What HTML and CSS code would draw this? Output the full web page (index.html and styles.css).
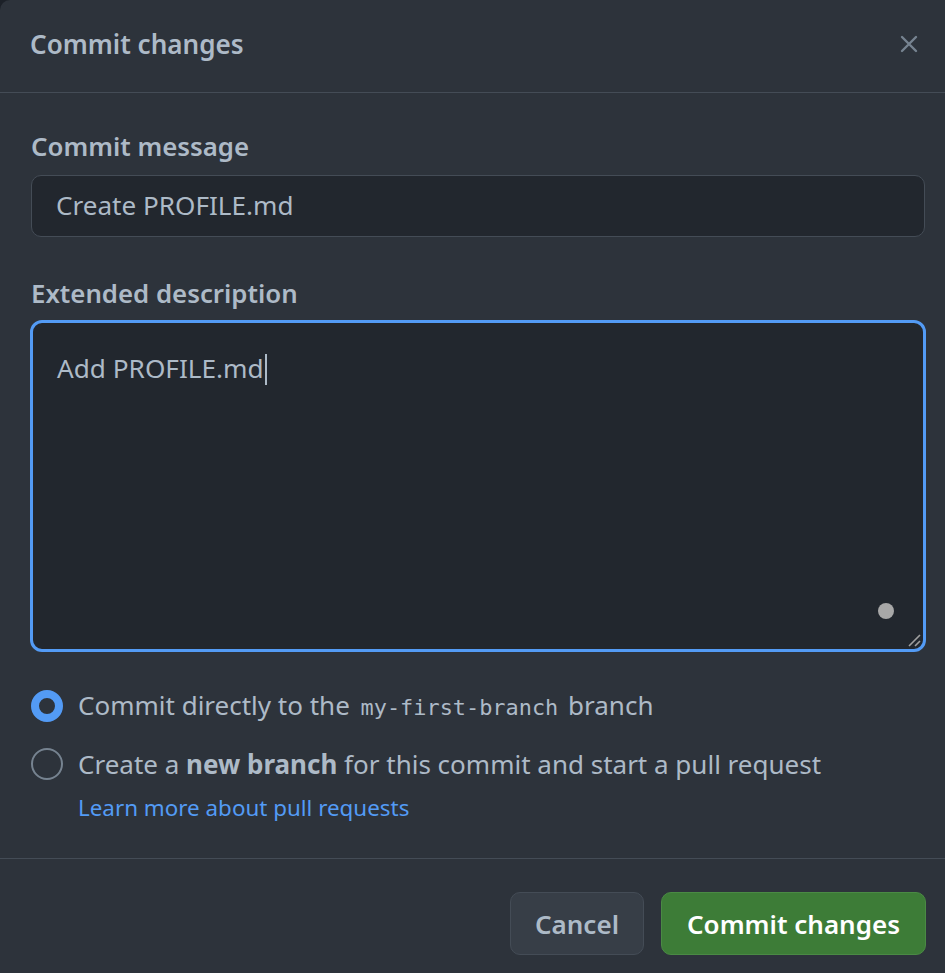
FILE: index.html
```html
<!DOCTYPE html>
<html lang="en">
<head>
<meta charset="utf-8">
<title>Commit changes</title>
<link rel="stylesheet" href="styles.css">
</head>
<body>
<div class="dialog">
  <header class="dialog-header">
    <h1 class="dialog-title">Commit changes</h1>
    <button class="close-btn" aria-label="Close">
      <svg width="18" height="18" viewBox="0 0 18 18"><path d="M2 2 L16 16 M16 2 L2 16" stroke="#768390" stroke-width="2.4" stroke-linecap="round" fill="none"/></svg>
    </button>
  </header>
  <div class="dialog-body">
    <label class="field-label">Commit message</label>
    <div class="text-input">Create PROFILE.md</div>
    <label class="field-label second">Extended description</label>
    <div class="textarea">
      <span class="ta-text">Add PROFILE.md</span><span class="caret"></span>
      <span class="ext-dot"></span>
      <svg class="resize" width="14" height="14" viewBox="0 0 14 14"><path d="M2 13 L13 2 M8 13 L13 8" stroke="#a0a0a0" stroke-width="1.6" fill="none"/></svg>
    </div>
    <div class="options">
      <div class="radio-row">
        <span class="radio checked"></span>
        <span class="radio-text">Commit directly to the <code class="mono">my-first-branch</code> branch</span>
      </div>
      <div class="radio-row">
        <span class="radio"></span>
        <span class="radio-text">Create a <strong>new branch</strong> for this commit and start a pull request</span>
      </div>
      <a class="learn-link" href="#">Learn more about pull requests</a>
    </div>
  </div>
  <footer class="dialog-footer">
    <button class="btn btn-cancel">Cancel</button>
    <button class="btn btn-primary">Commit changes</button>
  </footer>
</div>
</body>
</html>
```
FILE: styles.css
```css
* { box-sizing: border-box; }
html, body { margin: 0; padding: 0; }
body {
  background: #1c2128;
  font-family: "Noto Sans", "Open Sans", sans-serif;
  color: #adbac7;
  width: 945px;
  height: 973px;
  overflow: hidden;
}
.dialog {
  background: #2d333b;
  width: 945px;
  height: 973px;
  border-top-left-radius: 10px;
}
.dialog-header {
  height: 93px;
  border-bottom: 1px solid #444c56;
  display: flex;
  align-items: center;
  justify-content: space-between;
  padding: 0 27px 0 30px;
}
.dialog-title {
  margin: 0;
  font-size: 26.1px;
  font-weight: 600;
  color: #adbac7;
  line-height: 36px;
  position: relative;
  top: -2px;
}
.close-btn {
  background: none;
  border: 0;
  padding: 0;
  width: 18px;
  height: 18px;
  display: flex;
  position: relative;
  top: -2px;
}
.dialog-body {
  padding: 35px 20px 0 31px;
  display: flex;
  flex-direction: column;
}
.field-label {
  display: block;
  font-size: 25.8px;
  font-weight: 600;
  line-height: 36px;
  height: 36px;
  margin-bottom: 11px;
  color: #adbac7;
}
.field-label.second { margin-top: 38px; margin-bottom: 9px; }
.text-input {
  height: 62px;
  background: #22272e;
  border: 1.5px solid #444c56;
  border-radius: 10px;
  font-size: 26.1px;
  line-height: 59px;
  padding-left: 24px;
  color: #adbac7;
}
.textarea {
  position: relative;
  height: 332px;
  margin-left: -1px;
  margin-right: -1px;
  background: #22272e;
  border: 3px solid #539bf5;
  border-radius: 12px;
  padding: 25px 0 0 24px;
  font-size: 26.2px;
  line-height: 40px;
  color: #adbac7;
}
.caret {
  display: inline-block;
  width: 2px;
  height: 31px;
  background: #adbac7;
  vertical-align: -7px;
  margin-left: 1px;
}
.ext-dot {
  position: absolute;
  right: 29px;
  bottom: 30px;
  width: 16px;
  height: 16px;
  border-radius: 50%;
  background: #a8a8a8;
}
.resize {
  position: absolute;
  right: 2px;
  bottom: 2px;
}
.options {
  margin-top: 34px;
  display: flex;
  flex-direction: column;
}
.radio-row {
  display: flex;
  align-items: center;
  height: 40px;
  gap: 15px;
  margin-bottom: 18px;
}
.radio-row + .radio-row { margin-bottom: 6px; }
.radio {
  width: 32px;
  height: 32px;
  border-radius: 50%;
  border: 2px solid #768390;
  flex: none;
}
.radio.checked {
  border: 8.5px solid #539bf5;
  background: #2d333b;
}
.radio-text {
  font-size: 26px;
  line-height: 40px;
  color: #adbac7;
  white-space: nowrap;
}
.radio-text strong { font-weight: 700; }
.mono {
  font-family: "DejaVu Sans Mono", monospace;
  font-size: 21.9px;
  color: #adbac7;
  margin: 0 3px 0 4px;
}
.learn-link {
  margin-left: 47px;
  font-size: 22.4px;
  line-height: 36px;
  color: #539bf5;
  text-decoration: none;
}
.dialog-footer {
  margin-top: 32px;
  border-top: 1px solid #444c56;
  padding: 33px 19px 0 0;
  display: flex;
  justify-content: flex-end;
  gap: 17px;
}
.btn {
  height: 63px;
  border-radius: 10px;
  font-family: "Noto Sans", "Open Sans", sans-serif;
  font-size: 26px;
  font-weight: 600;
  padding: 0 20px;
  cursor: pointer;
}
.btn-cancel {
  width: 134px;
  background: #373e47;
  border: 1.5px solid #444c56;
  color: #adbac7;
}
.btn-primary {
  width: 265px;
  background: #3d7c37;
  border: 1.5px solid #4a8a44;
  color: #ffffff;
}
```
